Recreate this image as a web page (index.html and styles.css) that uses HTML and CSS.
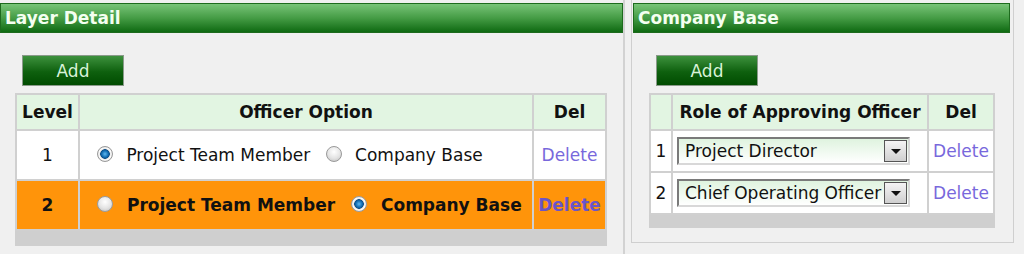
FILE: index.html
```html
<!DOCTYPE html>
<html>
    <head>
        <meta charset="UTF-8"/>
        <title>Approval Layers</title>
<link rel="stylesheet" href="styles.css">
    </head>
    <body>
        <div class="page">
            <div class="panel panel-left">
                <div class="panel-head">Layer Detail</div>
                <div class="panel-body">
                    <button class="btn add-btn">Add</button>
                    <table class="grid layer-grid">
                        <thead>
                            <tr>
                                <th class="col-level">Level</th>
                                <th>Officer Option</th>
                                <th class="col-del">Del</th>
                            </tr>
                        </thead>
                        <tbody>
                            <tr>
                                <td class="center">1</td>
                                <td class="options">
                                    <label><input type="radio" name="opt1" checked> Project Team Member</label>
                                    <label><input type="radio" name="opt1"> Company Base</label>
                                </td>
                                <td class="center"><a href="#" class="del-link">Delete</a></td>
                            </tr>
                            <tr class="selected">
                                <td class="center">2</td>
                                <td class="options">
                                    <label><input type="radio" name="opt2"> Project Team Member</label>
                                    <label><input type="radio" name="opt2" checked> Company Base</label>
                                </td>
                                <td class="center"><a href="#" class="del-link">Delete</a></td>
                            </tr>
                        </tbody>
                        <tfoot>
                            <tr><td colspan="3"></td></tr>
                        </tfoot>
                    </table>
                </div>
            </div>

            <div class="panel panel-right">
                <div class="panel-head">Company Base</div>
                <div class="panel-body">
                    <button class="btn add-btn">Add</button>
                    <table class="grid role-grid">
                        <thead>
                            <tr>
                                <th class="col-num"></th>
                                <th>Role of Approving Officer</th>
                                <th class="col-del2">Del</th>
                            </tr>
                        </thead>
                        <tbody>
                            <tr>
                                <td class="center">1</td>
                                <td>
                                    <div class="select">
                                        <span class="select-text">Project Director</span>
                                        <span class="select-arrow"></span>
                                    </div>
                                </td>
                                <td class="center"><a href="#" class="del-link">Delete</a></td>
                            </tr>
                            <tr>
                                <td class="center">2</td>
                                <td>
                                    <div class="select">
                                        <span class="select-text">Chief Operating Officer</span>
                                        <span class="select-arrow"></span>
                                    </div>
                                </td>
                                <td class="center"><a href="#" class="del-link">Delete</a></td>
                            </tr>
                        </tbody>
                        <tfoot>
                            <tr><td colspan="3"></td></tr>
                        </tfoot>
                    </table>
                </div>
            </div>
        </div>
    </body>
</html>
```

FILE: styles.css
```css
body {
    margin: 0;
    padding: 0;
    background: #f0f0f0;
    font-family: 'DejaVu Sans', Verdana, sans-serif;
    font-size: 17px;
    color: #111;
}

.page {
    display: flex;
    align-items: flex-start;
    gap: 6px;
}

.panel-left {
    width: 623px;
    height: 254px;
    border-right: 2px solid #d2d2d2;
}

.panel-right {
    width: 379px;
    height: 242px;
    border: 1px solid #cfcfcf;
    border-top: none;
    padding: 0 1px;
}

.panel-head {
    margin-top: 3px;
    height: 28px;
    line-height: 29px;
    padding-left: 4px;
    border: 1px solid #1d6b1d;
    background: linear-gradient(#78c478, #459c45 50%, #0f6a12);
    color: #f4fff0;
    font-weight: bold;
    font-size: 17px;
}

.panel-left .panel-head {
    width: 617px;
}

.panel-right .panel-head {
    width: 371px;
    margin-right: 2px;
}

.panel-left .panel-body {
    padding: 22px 16px 0 15px;
}

.panel-right .panel-body {
    padding: 22px 16px 0 16px;
}

.btn {
    display: block;
    font-family: 'DejaVu Sans', Verdana, sans-serif;
    cursor: pointer;
}

.add-btn {
    margin-left: 7px;
    width: 102px;
    height: 31px;
    border: 1px solid #8a9a8a;
    background: linear-gradient(#3d913d, #0e600e 55%, #004c00);
    color: #d8f2d8;
    font-size: 17px;
}

.grid {
    border-collapse: collapse;
    margin-top: 7px;
    background: #fff;
}

.grid th, .grid td {
    border: 2px solid #d0d0d0;
    padding: 0;
}

.grid th {
    background: #e2f5e2;
    height: 34px;
    font-weight: bold;
    text-align: center;
}

.layer-grid {
    width: 592px;
}

.layer-grid td {
    height: 48px;
}

.col-level {
    width: 61px;
}

.col-del {
    width: 71px;
}

.center {
    text-align: center;
}

.options {
    padding-left: 17px !important;
    white-space: nowrap;
}

.options label {
    margin-right: 10px;
}

.options input {
    appearance: none;
    -webkit-appearance: none;
    width: 16px;
    height: 16px;
    margin: 0 8px 0 0;
    vertical-align: -1px;
    border-radius: 50%;
    border: 1px solid #9a9a9a;
    background: radial-gradient(circle at 50% 35%, #ffffff, #e4e4e4 55%, #bdbdbd);
}

.options input:checked {
    background: radial-gradient(circle, #5fb8f0 0, #1672b8 3px, #0b4f8a 4.5px, #d8d8d8 5px, #ffffff 6px, #c8c8c8 8px);
}

.selected td {
    background: #ff940a;
    font-weight: bold;
}

.selected .del-link {
    color: #6a55c8;
    font-weight: bold;
}

.del-link {
    color: #7868dc;
    text-decoration: none;
}

.grid tfoot td {
    background: #cfcfcf;
    height: 13px;
    border: 2px solid #cfcfcf;
}

.role-grid {
    width: 346px;
}

.role-grid td {
    height: 40px;
}

.role-grid tfoot td {
    height: 11px;
}

.col-num {
    width: 20px;
}

.col-del2 {
    width: 64px;
}

.select {
    display: flex;
    align-items: center;
    margin-left: 4px;
    width: 229px;
    height: 24px;
    border: 2px solid;
    border-color: #7a7a7a #d8d8d8 #d8d8d8 #7a7a7a;
    background: linear-gradient(#dff3df, #ffffff);
}

.select-text {
    flex: 1;
    padding-left: 6px;
    white-space: nowrap;
    overflow: hidden;
}

.select-arrow {
    position: relative;
    flex: none;
    width: 21px;
    height: 20px;
    margin-right: 1px;
    border: 1px solid #555;
    background: linear-gradient(#f4f4f4, #cfcfcf);
}

.select-arrow::after {
    content: '';
    position: absolute;
    left: 6px;
    top: 8px;
    border-left: 5px solid transparent;
    border-right: 5px solid transparent;
    border-top: 5px solid #111;
}
```
